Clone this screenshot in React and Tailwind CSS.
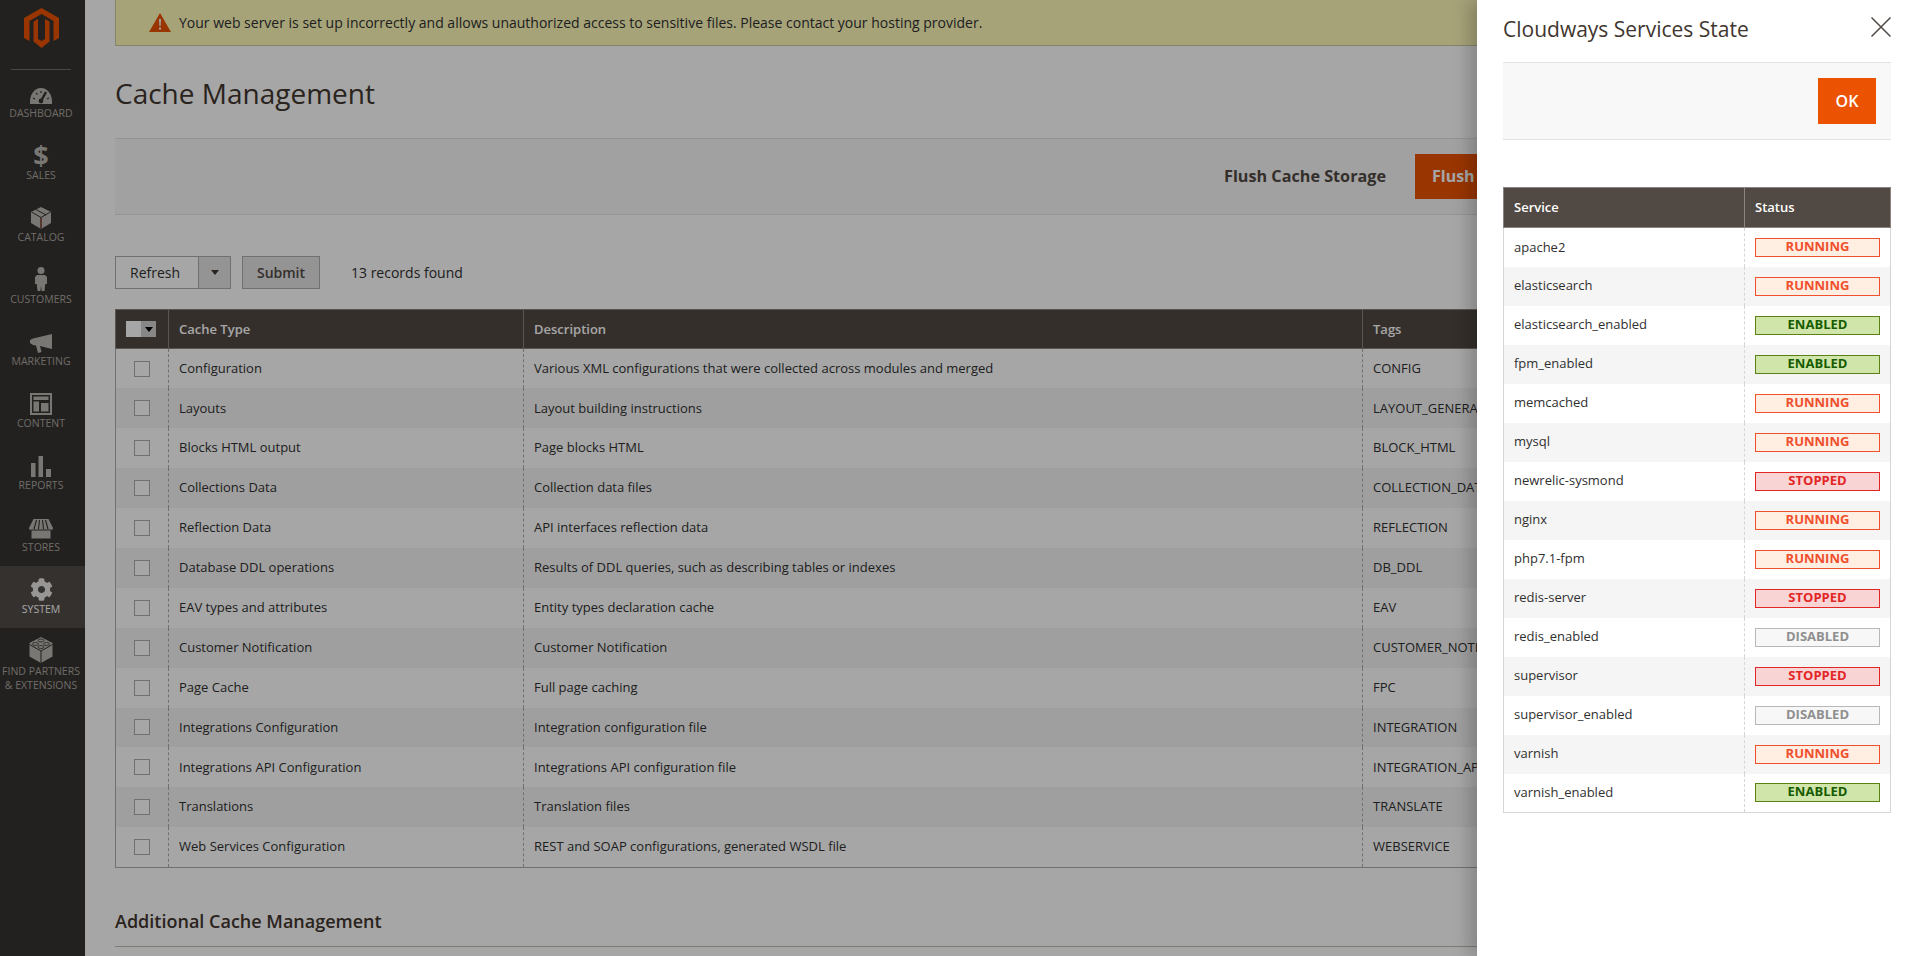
import React from 'react';
import { FaCog } from 'react-icons/fa';

const font = { fontFamily: '"Open Sans", sans-serif' };

const DashboardIcon = () => (
  <svg width="24" height="18" viewBox="0 0 24 18">
    <path fillRule="evenodd" fill="currentColor" d="M1 17 C0.3 8 5 1 12 1 C19 1 23.7 8 23 17 Z" />
    <path d="M12 14 L17 5" stroke="#373330" strokeWidth="2.4" />
    <circle cx="12" cy="14" r="2.4" fill="#373330" />
    <path d="M4 11 L6 12 M7 6 L8.5 7.5 M12 4 L12 6 M20 11 L18 12" stroke="#373330" strokeWidth="1.2" />
  </svg>
);

const DollarIcon = () => (
  <span className="block text-[27px] font-bold leading-[24px]">$</span>
);

const BoxIcon = () => (
  <svg width="20" height="22" viewBox="0 0 20 22">
    <path fill="currentColor" d="M10 0 L20 5 L20 16 L10 22 L0 16 L0 5 Z" />
    <path d="M0.5 5 L10 10.5 L19.5 5 M10 10.5 V22 M5 2.5 L15 8" stroke="#373330" strokeWidth="1" fill="none" />
    <path d="M10 11 V21" stroke="#8a3a20" strokeWidth="1" />
  </svg>
);

const PersonIcon = () => (
  <svg width="12" height="24" viewBox="0 0 12 24">
    <circle cx="6" cy="3.5" r="3.5" fill="currentColor" />
    <path fill="currentColor" d="M2 8 H10 L12 10 V17 H10.2 L9.5 24 H6.6 L6 19 L5.4 24 H2.5 L1.8 17 H0 V10 Z" />
  </svg>
);

const MegaphoneIcon = () => (
  <svg width="23" height="19" viewBox="0 0 23 19">
    <path fill="currentColor" d="M22 0 V15 L10 12 L11.5 18 L8 19 L6 11.5 L3 11 L0 9 V6 L3 4.5 Z" />
  </svg>
);

const ContentIcon = () => (
  <svg width="22" height="22" viewBox="0 0 22 22">
    <path fillRule="evenodd" fill="currentColor" d="M0 0 H22 V22 H0 Z M2 2 V20 H20 V2 Z" />
    <path fill="currentColor" d="M3.5 3.5 H18.5 V7 H3.5 Z M3.5 8.5 H9 V18.5 H3.5 Z M11 10 H18.5 V18.5 H11 Z" />
  </svg>
);

const ReportsIcon = () => (
  <svg width="20" height="21" viewBox="0 0 20 21">
    <path fill="currentColor" d="M0 7 H4.5 V21 H0 Z M7.5 0 H12 V21 H7.5 Z M15 13 H20 V21 H15 Z" />
  </svg>
);

const StoreIcon = () => (
  <svg width="24" height="20" viewBox="0 0 24 20">
    <path fill="currentColor" d="M4.5 0 H19.5 L24 9 C24 11 22 11 21.5 11 V19.5 H2.5 V11 C2 11 0 11 0 9 Z" />
    <path d="M7.5 1 L5 10 M10.5 1 L9.5 10 M13.5 1 L14.5 10 M16.5 1 L19 10 M2 11 H22" stroke="#373330" strokeWidth="1.1" />
  </svg>
);

const BrickIcon = () => (
  <svg width="24" height="26" viewBox="0 0 24 26">
    <path fill="currentColor" d="M12 0 L23.5 6 V19.5 L12 26 L0.5 19.5 V6 Z" />
    <path d="M0.5 7.5 L12 14 L23.5 7.5 M12 14 V26" stroke="#373330" strokeWidth="1" fill="none" />
    <ellipse cx="12" cy="3.5" rx="3" ry="1.5" stroke="#373330" strokeWidth="0.8" fill="none" />
    <ellipse cx="6.5" cy="7" rx="3" ry="1.5" stroke="#373330" strokeWidth="0.8" fill="none" />
    <ellipse cx="17.5" cy="7" rx="3" ry="1.5" stroke="#373330" strokeWidth="0.8" fill="none" />
    <ellipse cx="12" cy="10" rx="3" ry="1.5" stroke="#373330" strokeWidth="0.8" fill="none" />
  </svg>
);

const menu = [
  { label: 'Dashboard', icon: <DashboardIcon /> },
  { label: 'Sales', icon: <DollarIcon /> },
  { label: 'Catalog', icon: <BoxIcon /> },
  { label: 'Customers', icon: <PersonIcon /> },
  { label: 'Marketing', icon: <MegaphoneIcon /> },
  { label: 'Content', icon: <ContentIcon /> },
  { label: 'Reports', icon: <ReportsIcon /> },
  { label: 'Stores', icon: <StoreIcon /> },
  { label: 'System', icon: <FaCog size={23} />, active: true },
  { label: 'Find Partners', label2: '& Extensions', icon: <BrickIcon /> },
];

const cacheRows = [
  ['Configuration', 'Various XML configurations that were collected across modules and merged', 'CONFIG'],
  ['Layouts', 'Layout building instructions', 'LAYOUT_GENERAL_CACHE_TAG'],
  ['Blocks HTML output', 'Page blocks HTML', 'BLOCK_HTML'],
  ['Collections Data', 'Collection data files', 'COLLECTION_DATA'],
  ['Reflection Data', 'API interfaces reflection data', 'REFLECTION'],
  ['Database DDL operations', 'Results of DDL queries, such as describing tables or indexes', 'DB_DDL'],
  ['EAV types and attributes', 'Entity types declaration cache', 'EAV'],
  ['Customer Notification', 'Customer Notification', 'CUSTOMER_NOTIFICATION'],
  ['Page Cache', 'Full page caching', 'FPC'],
  ['Integrations Configuration', 'Integration configuration file', 'INTEGRATION'],
  ['Integrations API Configuration', 'Integrations API configuration file', 'INTEGRATION_API_CONFIG'],
  ['Translations', 'Translation files', 'TRANSLATE'],
  ['Web Services Configuration', 'REST and SOAP configurations, generated WSDL file', 'WEBSERVICE'],
];

const services = [
  ['apache2', 'running'],
  ['elasticsearch', 'running'],
  ['elasticsearch_enabled', 'enabled'],
  ['fpm_enabled', 'enabled'],
  ['memcached', 'running'],
  ['mysql', 'running'],
  ['newrelic-sysmond', 'stopped'],
  ['nginx', 'running'],
  ['php7.1-fpm', 'running'],
  ['redis-server', 'stopped'],
  ['redis_enabled', 'disabled'],
  ['supervisor', 'stopped'],
  ['supervisor_enabled', 'disabled'],
  ['varnish', 'running'],
  ['varnish_enabled', 'enabled'],
];

const badgeClass = {
  running: 'bg-[#ffeee2] border-[#f0502d] text-[#f0502d]',
  stopped: 'bg-[#f9d4d4] border-[#e22626] text-[#e22626]',
  disabled: 'bg-[#f7f7f7] border-[#b8b8b8] text-[#8f8f8f]',
  enabled: 'bg-[#d0e5a9] border-[#5b8116] text-[#185b00]',
};

const Sidebar = () => (
  <aside className="w-[85px] shrink-0 bg-[#373330] flex flex-col">
    <div className="h-[70px] shrink-0 ml-[11px] mr-[14px] border-b border-[#736e69] flex justify-center pt-[8px]">
      <svg width="35" height="40" viewBox="0 0 35 40" fill="#eb5202">
        <path d="M17.5 0 L35 10 V30 L29.5 33 V13 L17.5 6 L5.5 13 V33 L0 30 V10 Z" />
        <path d="M9.5 13.5 L14 11 V31 L17.5 33 L21 31 V11 L25.5 13.5 V33.5 L17.5 40 L9.5 33.5 Z" />
      </svg>
    </div>
    {menu.map(item => (
      <div
        key={item.label}
        className={`h-[62px] shrink-0 pr-[3px] flex flex-col items-center uppercase text-[10.5px] leading-[14px] whitespace-nowrap ${
          item.active ? 'bg-[#524c48] text-white' : 'text-[#aaa6a0]'
        }`}
      >
        <div className={`h-[36px] shrink-0 flex items-end justify-center pb-[1px] ${item.active ? 'text-[#e8e6e3]' : 'text-[#bbb7b2]'}`}>
          {item.icon}
        </div>
        <div className="text-center">{item.label}</div>
        {item.label2 && <div className="text-center">{item.label2}</div>}
      </div>
    ))}
  </aside>
);

const CachePage = () => (
  <main className="flex-1 min-w-0 px-[30px] pr-[21px] text-[#303030]">
    <div className="h-[46px] bg-[#fffbbb] border border-t-0 border-[#d0cca0] flex items-center pl-[33px] text-[14px]">
      <svg width="22" height="19" viewBox="0 0 22 19" className="shrink-0 mr-[8px]">
        <path d="M11 0 L22 19 H0 Z" fill="#eb5202" />
        <path d="M10 6 H12 L11.6 13 H10.4 Z M10 14.4 H12 V16.4 H10 Z" fill="#fff" />
      </svg>
      Your web server is set up incorrectly and allows unauthorized access to sensitive files. Please contact your hosting provider.
    </div>

    <h1 className="h-[92px] flex items-center pt-[2px] text-[28px] font-normal text-[#41362f]">Cache Management</h1>

    <div className="h-[77px] bg-[#f8f8f8] border-y border-[#e3e3e3] flex items-center pl-[1109px] whitespace-nowrap overflow-hidden">
      <span className="text-[16.2px] font-bold text-[#514943] pb-[1px]">Flush Cache Storage</span>
      <button className="ml-[29px] h-[45px] px-[17px] bg-[#eb5202] text-white text-[16px] font-bold pb-[2px]">
        Flush Magento Cache
      </button>
    </div>

    <div className="mt-[41px] flex items-center text-[14px]">
      <div className="h-[33px] w-[116px] flex bg-white border border-[#adadad]">
        <span className="w-[82px] pl-[14px] leading-[31px]">Refresh</span>
        <span className="flex-1 bg-[#e3e3e3] border-l border-[#adadad] flex items-center justify-center">
          <span className="w-0 h-0 border-x-[4px] border-x-transparent border-t-[5px] border-t-[#41362f]" />
        </span>
      </div>
      <button className="ml-[11px] h-[33px] w-[78px] bg-[#e3e3e3] border border-[#adadad] font-semibold text-[#514943]">
        Submit
      </button>
      <span className="ml-[31px]">13 records found</span>
    </div>

    <table className="mt-[20px] w-full table-fixed border-collapse text-[13px]">
      <colgroup>
        <col className="w-[53px]" />
        <col className="w-[355px]" />
        <col className="w-[839px]" />
        <col />
      </colgroup>
      <thead>
        <tr className="h-[39px] bg-[#514943] text-white font-semibold text-left">
          <th className="border border-[#8a837f] font-semibold">
            <div className="ml-[10px] w-[30px] h-[16px] flex">
              <span className="w-[15px] bg-white" />
              <span className="flex-1 bg-[#d0d0d0] flex items-center justify-center">
                <span className="w-0 h-0 border-x-[4px] border-x-transparent border-t-[5px] border-t-black" />
              </span>
            </div>
          </th>
          <th className="border border-[#8a837f] px-[10px] pt-[2px] font-semibold">Cache Type</th>
          <th className="border border-[#8a837f] px-[10px] pt-[2px] font-semibold">Description</th>
          <th className="border border-[#8a837f] px-[10px] pt-[2px] font-semibold">Tags</th>
        </tr>
      </thead>
      <tbody className="border border-[#adadad]">
        {cacheRows.map((row, i) => (
          <tr key={row[0]} className={`h-[39.9px] ${i % 2 ? 'bg-[#f5f5f5]' : 'bg-white'}`}>
            <td>
              <div className="ml-[18px] w-[16px] h-[16px] bg-white border border-[#adadad]" />
            </td>
            <td className="border-l border-dashed border-[#adadad] px-[10px]">{row[0]}</td>
            <td className="border-l border-dashed border-[#adadad] px-[10px]">{row[1]}</td>
            <td className="border-l border-dashed border-[#adadad] px-[10px] overflow-hidden whitespace-nowrap">{row[2]}</td>
          </tr>
        ))}
      </tbody>
    </table>

    <h2 className="mt-[41px] text-[18px] font-semibold leading-[24px] text-[#41362f]">Additional Cache Management</h2>
    <div className="mt-[13px] border-b border-[#c4bdb3]" />
  </main>
);

const ServicesPanel = () => (
  <aside className="absolute top-0 right-0 bottom-0 w-[435px] bg-white pl-[26px] pr-[21px] shadow-[-8px_0_16px_rgba(0,0,0,0.2)] text-[#303030]">
    <div className="h-[63px] border-b border-[#e3e3e3] flex items-start justify-between">
      <h2 className="mt-[13px] text-[21px] leading-[32px] text-[#41362f]">Cloudways Services State</h2>
      <svg width="20" height="20" viewBox="0 0 20 20" className="mt-[17px]" stroke="#514943" strokeWidth="1.5">
        <path d="M0.5 0.5 L19.5 19.5 M19.5 0.5 L0.5 19.5" />
      </svg>
    </div>
    <div className="h-[77px] bg-[#f8f8f8] border-b border-[#e3e3e3] flex items-center justify-end pr-[15px]">
      <button className="w-[58px] h-[46px] bg-[#eb5202] text-white text-[16px] font-semibold">OK</button>
    </div>
    <table className="mt-[47px] w-full table-fixed border-collapse text-[13px]">
      <colgroup>
        <col className="w-[241px]" />
        <col />
      </colgroup>
      <thead>
        <tr className="h-[40px] bg-[#514943] text-white text-left">
          <th className="border border-[#8a837f] px-[10px] font-semibold">Service</th>
          <th className="border border-[#8a837f] px-[10px] font-semibold">Status</th>
        </tr>
      </thead>
      <tbody className="border border-[#d6d6d6]">
        {services.map(([name, state], i) => (
          <tr key={name} className={`h-[39px] ${i % 2 ? 'bg-[#f5f5f5]' : 'bg-white'}`}>
            <td className="px-[10px]">{name}</td>
            <td className="pl-[10px] pr-[10px] border-l border-dashed border-[#d6d6d6]">
              <div className={`h-[19px] border text-center text-[13px] font-bold leading-[14px] uppercase ${badgeClass[state]}`}>
                {state}
              </div>
            </td>
          </tr>
        ))}
      </tbody>
    </table>
  </aside>
);

const App = () => (
  <div className="relative w-full h-[956px] overflow-hidden bg-white flex" style={font}>
    <Sidebar />
    <CachePage />
    <div className="absolute inset-0 bg-black/35" />
    <ServicesPanel />
  </div>
);

export default App;
